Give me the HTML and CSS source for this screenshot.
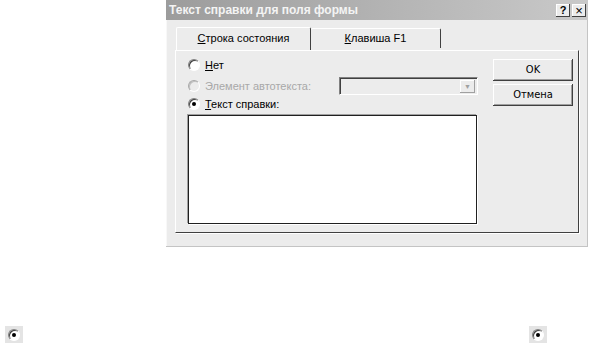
FILE: index.html
```html
<!DOCTYPE html>
<html lang="ru">
<head>
  <meta charset="UTF-8">
  <title>Текст справки для поля формы</title>
  <link rel="stylesheet" href="styles.css">
</head>
<body>
  <div class="window">
    <div class="titlebar">
      <span class="title">Текст справки для поля формы</span>
      <span class="title-btns">
        <span class="tbtn">?</span>
        <span class="tbtn close">×</span>
      </span>
    </div>

    <div class="tabs">
      <div class="tab active"><u>С</u>трока состояния</div>
      <div class="tab"><u>К</u>лавиша F1</div>
    </div>

    <div class="panel">
      <div class="left">
        <div class="row">
          <span class="radio"></span>
          <span><u>Н</u>ет</span>
        </div>
        <div class="row auto">
          <span class="radio faded"></span>
          <span class="disabled">Элемент автотекста:</span>
          <span class="combo"><span class="drop">▼</span></span>
        </div>
        <div class="row">
          <span class="radio checked"></span>
          <span><u>Т</u>екст справки:</span>
        </div>
        <div class="textbox"></div>
      </div>
      <div class="buttons">
        <div class="btn">OK</div>
        <div class="btn">Отмена</div>
      </div>
    </div>
  </div>

  <div class="bottom">
    <span class="mini"><span class="radio checked"></span></span>
    <span class="mini"><span class="radio checked"></span></span>
  </div>
</body>
</html>
```

FILE: styles.css
```css
body {
  margin: 0;
  width: 590px;
  height: 344px;
  background: #fff;
  font-family: "Liberation Sans", Arial, sans-serif;
  font-size: 11px;
  color: #000;
  overflow: hidden;
}
.window {
  margin-left: 166px;
  width: 422px;
  height: 247px;
  background: #ececec;
  box-shadow: inset -1px -1px 0 #c4c4c4, inset 1px 1px 0 #f8f8f8;
  box-sizing: border-box;
}
.titlebar {
  height: 20px;
  background: linear-gradient(to right, #9c9c9c, #c9c9c9);
  color: #f4f4f4;
  display: flex;
  align-items: center;
  justify-content: space-between;
  padding: 0 2px 0 3px;
}
.title {
  font-weight: bold;
  font-size: 12px;
}
.title-btns {
  display: flex;
  gap: 2px;
}
.tbtn {
  width: 14px;
  height: 13px;
  background: #ececec;
  color: #000;
  font-weight: bold;
  font-size: 11px;
  line-height: 13px;
  text-align: center;
  box-shadow: inset -1px -1px 0 #404040, inset 1px 1px 0 #fff;
}
.tbtn.close {
  font-size: 13px;
  font-weight: normal;
}
.tabs {
  display: flex;
  align-items: flex-end;
  height: 30px;
  padding-left: 10px;
}
.tab {
  width: 130px;
  height: 20px;
  line-height: 19px;
  text-align: center;
  border-top: 1px solid #fff;
  border-left: 1px solid #fff;
  border-right: 1px solid #404040;
  border-radius: 2px 2px 0 0;
  margin-bottom: 2px;
  box-sizing: border-box;
}
.tab.active {
  width: 135px;
  height: 23px;
  margin-bottom: 0;
  padding-top: 2px;
  line-height: 17px;
}
.tab.active + .tab {
  border-left: none;
}
.panel {
  margin-left: 9px;
  width: 404px;
  height: 183px;
  border-top: 1px solid #fff;
  border-left: 1px solid #fff;
  border-right: 1px solid #404040;
  border-bottom: 1px solid #404040;
  box-shadow: 1px 1px 0 #fff;
  box-sizing: border-box;
  display: flex;
  padding: 5px 0 0 12px;
}
.left {
  width: 290px;
}
.row {
  height: 18px;
  display: flex;
  align-items: center;
  gap: 5px;
}
.row.auto {
  height: 19px;
  margin-top: 2px;
}
.disabled {
  color: #a8a8a8;
}
.radio {
  width: 12px;
  height: 12px;
  border-radius: 50%;
  background: #fff;
  border: 1px solid;
  border-color: #808080 #fff #fff #808080;
  box-shadow: inset 1px 1px 0 #404040;
  box-sizing: border-box;
  position: relative;
  flex: none;
}
.radio.faded {
  background: #ececec;
  border-color: #a8a8a8 #fff #fff #a8a8a8;
  box-shadow: inset 1px 1px 0 #c0c0c0;
}
.radio.checked::after {
  content: "";
  position: absolute;
  left: 3px;
  top: 3px;
  width: 4px;
  height: 4px;
  border-radius: 50%;
  background: #000;
}
.combo {
  margin-left: auto;
  width: 139px;
  height: 18px;
  background: #ececec;
  border: 1px solid;
  border-color: #808080 #fff #fff #808080;
  box-shadow: inset 1px 1px 0 #404040;
  box-sizing: border-box;
  display: flex;
  justify-content: flex-end;
  padding: 2px;
}
.drop {
  width: 15px;
  height: 13px;
  font-size: 7px;
  line-height: 13px;
  text-align: center;
  color: #a0a0a0;
  box-shadow: inset -1px -1px 0 #a0a0a0, inset 1px 1px 0 #fff;
}
.textbox {
  margin-top: 2px;
  width: 289px;
  height: 109px;
  background: #fff;
  border: 1px solid #202020;
  box-shadow: 1px 1px 0 #fff, -1px -1px 0 #a0a0a0;
  box-sizing: border-box;
}
.buttons {
  margin-left: 15px;
  padding-top: 3px;
  display: flex;
  flex-direction: column;
  gap: 3px;
}
.btn {
  width: 80px;
  height: 22px;
  line-height: 21px;
  text-align: center;
  font-family: "DejaVu Sans Condensed", "Liberation Sans Narrow", sans-serif;
  font-size: 11px;
  box-shadow: inset -1px -1px 0 #404040, inset 1px 1px 0 #fff, inset -2px -2px 0 #a0a0a0;
}
.bottom {
  display: flex;
  justify-content: space-between;
  margin-top: 79px;
  padding: 0 43px 0 5px;
}
.mini {
  width: 18px;
  height: 17px;
  background: #e4e4e4;
  display: flex;
  align-items: center;
  justify-content: center;
}
```
